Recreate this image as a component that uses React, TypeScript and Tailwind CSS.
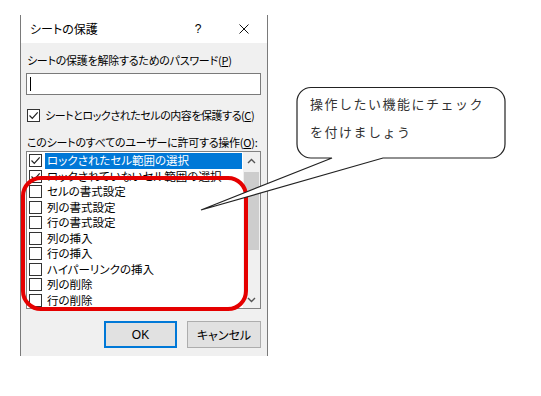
import React from "react";

const items = [
  { label: "ロックされたセル範囲の選択", checked: true, selected: true },
  { label: "ロックされていないセル範囲の選択", checked: true },
  { label: "セルの書式設定" },
  { label: "列の書式設定" },
  { label: "行の書式設定" },
  { label: "列の挿入" },
  { label: "行の挿入" },
  { label: "ハイパーリンクの挿入" },
  { label: "列の削除" },
  { label: "行の削除" }
];

function Box({ checked }: { checked?: boolean }) {
  return (
    <span className="flex h-[13px] w-[13px] shrink-0 items-center justify-center border border-[#333] bg-white">
      {checked && (
        <svg width="11" height="11" viewBox="0 0 11 11">
          <path d="M1.5 5.5 L4.3 8.3 L9.7 2.3" fill="none" stroke="#222" strokeWidth="1.2" />
        </svg>
      )}
    </span>
  );
}

export default function App() {
  return (
    <div className="relative h-[396px] w-[541px] overflow-hidden bg-white font-['Noto_Sans_CJK_JP',sans-serif] text-[11px] text-black [font-feature-settings:'palt']">
      <div className="ml-[20px] mt-[15px] flex h-[341px] w-[248px] flex-col border-x border-[#7a7a7a]">
        {/* title bar */}
        <div className="flex h-[28px] items-center bg-white">
          <span className="flex-1 pl-[9px] text-[12px] leading-none">シートの保護</span>
          <span className="flex w-[46px] justify-center font-['Liberation_Sans',sans-serif] text-[12px]">?</span>
          <span className="flex w-[46px] justify-center">
            <svg width="10" height="10" viewBox="0 0 10 10">
              <path d="M0.5 0.5 L9.5 9.5 M9.5 0.5 L0.5 9.5" stroke="#111" strokeWidth="1" />
            </svg>
          </span>
        </div>

        {/* body */}
        <div className="flex flex-1 flex-col whitespace-nowrap bg-[#f0f0f0] pl-[5px] pt-[9px]">
          <div className="h-[16px] pl-[1px] leading-[16px] tracking-[-0.25px]">
            シートの保護を解除するためのパスワード(<span className="underline">P</span>)
          </div>
          <div className="mt-[5px] flex h-[22px] w-[235px] items-center border border-[#7a7a7a] bg-white pl-[3px]">
            <span className="h-[14px] w-[1px] bg-black" />
          </div>
          <div className="mt-[12px] flex h-[16px] items-center gap-[5px] pl-[1px]">
            <Box checked />
            <span className="leading-[16px] tracking-[-0.45px]">
              シートとロックされたセルの内容を保護する(<span className="underline">C</span>)
            </span>
          </div>
          <div className="mt-[11px] h-[16px] pl-[1px] leading-[16px] tracking-[-0.25px]">
            このシートのすべてのユーザーに許可する操作(<span className="underline">O</span>):
          </div>

          {/* list */}
          <div className="mt-[1px] flex h-[158px] w-[235px] overflow-hidden border border-[#828282] bg-white">
            <div className="flex flex-1 flex-col pl-[2px] pt-[1px]">
              {items.map((it) => (
                <div key={it.label} className="flex h-[15.5px] shrink-0 items-center">
                  <Box checked={it.checked} />
                  <span
                    className={
                      it.selected
                        ? "ml-[3px] mr-[1px] flex h-[15.5px] flex-1 items-center bg-[#0078d7] pl-[2px] text-[11.5px] leading-none text-white"
                        : "ml-[3px] flex h-[15.5px] flex-1 items-center pl-[2px] text-[11.5px] leading-none"
                    }
                  >
                    {it.label}
                  </span>
                </div>
              ))}
            </div>
            <div className="flex w-[17px] flex-col bg-[#f0f0f0]">
              <div className="flex h-[17px] items-center justify-center">
                <svg width="9" height="6" viewBox="0 0 9 6">
                  <path d="M1 5 L4.5 1.5 L8 5" fill="none" stroke="#555" strokeWidth="1.4" />
                </svg>
              </div>
              <div className="mx-[1px] mt-[3px] h-[78px] bg-[#cdcdcd]" />
              <div className="flex-1" />
              <div className="flex h-[17px] items-center justify-center">
                <svg width="9" height="6" viewBox="0 0 9 6">
                  <path d="M1 1 L4.5 4.5 L8 1" fill="none" stroke="#555" strokeWidth="1.4" />
                </svg>
              </div>
            </div>
          </div>

          {/* buttons */}
          <div className="mt-[12px] flex justify-end gap-[10px] pr-[6px]">
            <button className="flex h-[27px] w-[73px] items-center justify-center border-2 border-[#0078d7] bg-[#e1e1e1] font-['Liberation_Sans',sans-serif] text-[12px]">
              OK
            </button>
            <button className="flex h-[27px] w-[74px] items-center justify-center border border-[#adadad] bg-[#e1e1e1] text-[12px]">
              キャンセル
            </button>
          </div>
        </div>
      </div>

      {/* red highlight */}
      <div className="absolute left-[21px] top-[176px] h-[135px] w-[227px] rounded-[20px] border-[4px] border-[#e50000]" />

      {/* callout */}
      <svg className="pointer-events-none absolute left-0 top-0" width="541" height="396">
        <path
          d="M311 87.5 H491 A14 14 0 0 1 505 101.5 V144 A14 14 0 0 1 491 158 H383 L201 210 L332 158 H311 A14 14 0 0 1 297 144 V101.5 A14 14 0 0 1 311 87.5 Z"
          fill="white"
          stroke="#222"
          strokeWidth="1.2"
        />
      </svg>
      <div className="absolute left-[310px] top-[90px] text-[13px] leading-[28px] tracking-[1.5px] text-[#333] [font-feature-settings:normal]">
        <div>操作したい機能にチェック</div>
        <div>を付けましょう</div>
      </div>
    </div>
  );
}
